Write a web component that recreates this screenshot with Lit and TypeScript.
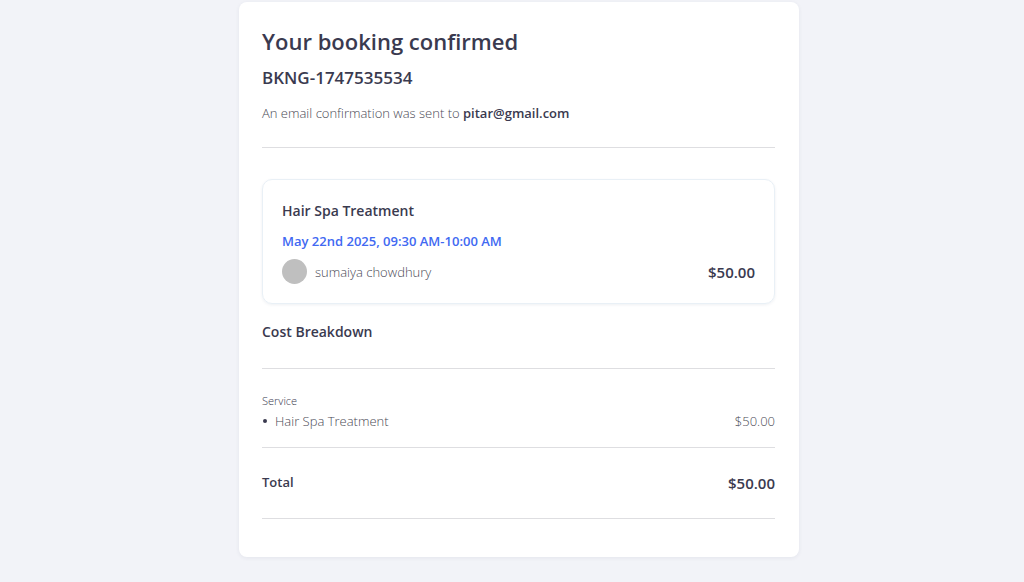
import { LitElement, html, css } from "lit";
import { customElement, property } from "lit/decorators.js";

@customElement("booking-item")
class BookingItem extends LitElement {
  @property() name = "";
  @property() time = "";
  @property() staff = "";
  @property() price = "";

  static styles = css`
    :host {
      display: block;
      border: 1px solid #e9f0f6;
      border-radius: 10px;
      padding: 19px;
      box-shadow: 0 1px 3px rgba(40, 60, 100, 0.08);
    }
    .name {
      margin: 0;
      font-size: 14px;
      line-height: 24px;
      font-weight: 600;
    }
    .time {
      margin: 8px 0 0;
      font-size: 13px;
      line-height: 20px;
      font-weight: 600;
      color: #4169f2;
    }
    .row {
      display: flex;
      align-items: center;
      margin-top: 8px;
    }
    .avatar {
      width: 25px;
      height: 25px;
      border-radius: 50%;
      background: #bfbfbf;
    }
    .staff {
      margin-left: 8px;
      font-size: 13px;
      line-height: 20px;
      font-weight: 300;
      color: #4a4a55;
    }
    .price {
      margin-left: auto;
      font-size: 15px;
      line-height: 24px;
      font-weight: 600;
    }
  `;

  render() {
    return html`
      <h3 class="name">${this.name}</h3>
      <p class="time">${this.time}</p>
      <div class="row">
        <span class="avatar"></span>
        <span class="staff">${this.staff}</span>
        <span class="price">${this.price}</span>
      </div>
    `;
  }
}

@customElement("app-root")
class AppRoot extends LitElement {
  private services = [{ name: "Hair Spa Treatment", price: "$50.00" }];

  static styles = css`
    :host {
      display: block;
      box-sizing: border-box;
      min-height: 100vh;
      padding: 2px 16px 24px 30px;
      background: #f2f3f8;
      color: #3a3a4f;
      font-family: "Open Sans", "Noto Sans", sans-serif;
    }
    .card {
      box-sizing: border-box;
      max-width: 560px;
      margin: 0 auto;
      padding: 24px 24px 38px 23px;
      background: #fff;
      border-radius: 8px;
      box-shadow: 0 1px 4px rgba(40, 50, 80, 0.07);
    }
    .title {
      margin: 0;
      font-size: 22px;
      line-height: 31px;
      font-weight: 600;
    }
    .code {
      margin: 9px 0 0;
      font-size: 17px;
      line-height: 24px;
      font-weight: 600;
    }
    .sent {
      margin: 13px 0 0;
      font-size: 13px;
      line-height: 20px;
      font-weight: 300;
      color: #4a4a55;
    }
    .sent strong {
      font-weight: 600;
      color: #3a3a4f;
    }
    .line {
      height: 1px;
      margin: 24px 0 0;
      border: 0;
      background: #dedee1;
    }
    booking-item {
      margin-top: 31px;
    }
    .heading {
      margin: 16px 0 0;
      font-size: 14px;
      line-height: 24px;
      font-weight: 600;
    }
    .label {
      margin: 22px 0 0;
      font-size: 11px;
      line-height: 20px;
      font-weight: 300;
    }
    .services {
      margin: 0 0 -8px;
      padding: 0;
      list-style: none;
    }
    .service {
      display: flex;
      align-items: center;
      font-size: 13px;
      line-height: 20px;
      font-weight: 300;
      color: #4a4a55;
    }
    .service::before {
      content: "";
      width: 4px;
      height: 4px;
      margin: 0 8px 0 1px;
      border-radius: 50%;
      background: #3a3a4f;
    }
    .amount {
      margin-left: auto;
    }
    .total {
      display: flex;
      justify-content: space-between;
      margin-top: 24px;
      font-weight: 600;
      line-height: 22px;
    }
    .total-label {
      font-size: 13px;
      line-height: 20px;
    }
    .total-amount {
      font-size: 15px;
    }
  `;

  render() {
    return html`
      <main class="card">
        <h1 class="title">Your booking confirmed</h1>
        <h2 class="code">BKNG-1747535534</h2>
        <p class="sent">An email confirmation was sent to <strong>pitar@gmail.com</strong></p>
        <hr class="line" />
        <booking-item
          name="Hair Spa Treatment"
          time="May 22nd 2025, 09:30 AM-10:00 AM"
          staff="sumaiya chowdhury"
          price="$50.00"
        ></booking-item>
        <h3 class="heading">Cost Breakdown</h3>
        <hr class="line" />
        <p class="label">Service</p>
        <ul class="services">
          ${this.services.map(
            (s) => html`<li class="service"><span>${s.name}</span><span class="amount">${s.price}</span></li>`
          )}
        </ul>
        <hr class="line" />
        <div class="total">
          <span class="total-label">Total</span>
          <span class="total-amount">$50.00</span>
        </div>
        <hr class="line" />
      </main>
    `;
  }
}
